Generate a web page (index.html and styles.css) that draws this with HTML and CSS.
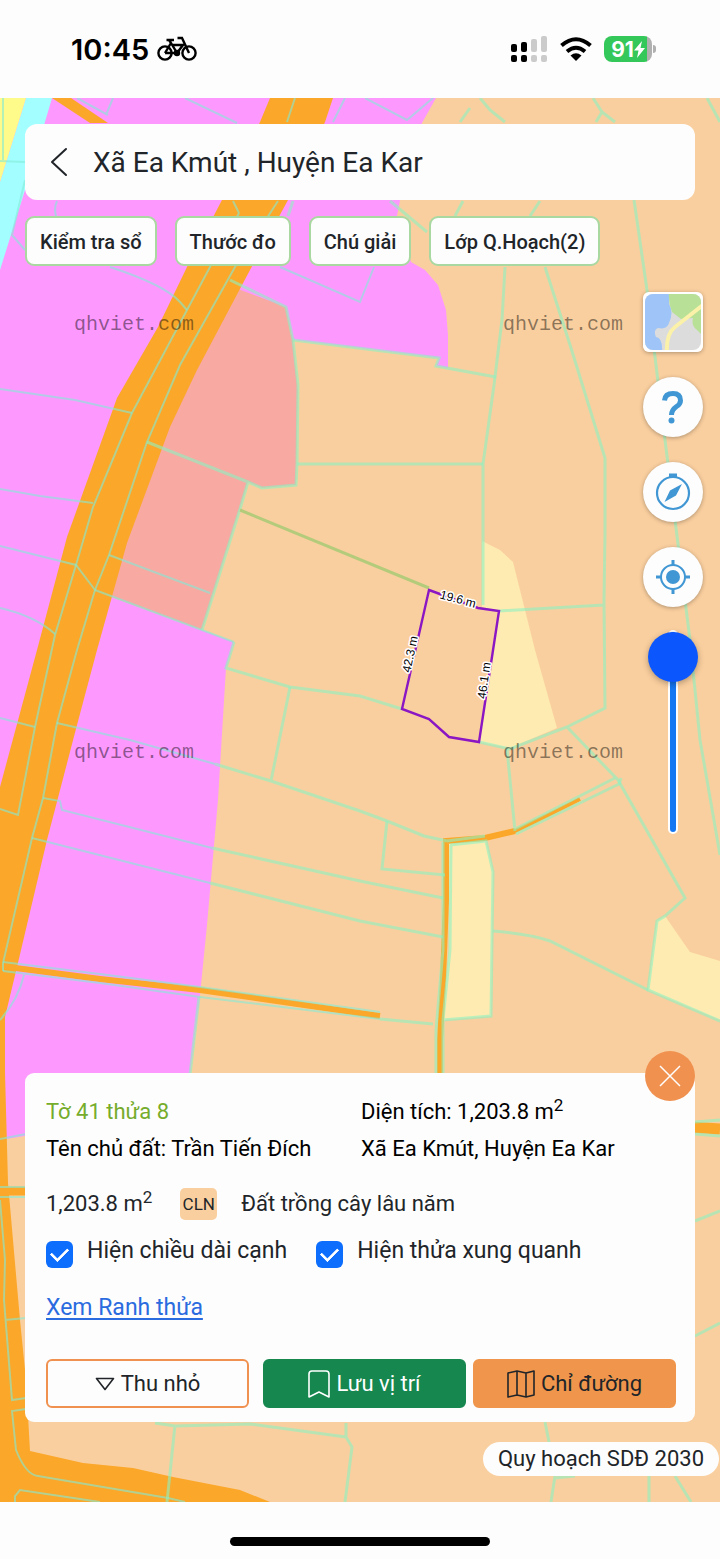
FILE: index.html
```html
<!DOCTYPE html>
<html lang="vi">
  <head>
    <title>Xã Ea Kmút, Huyện Ea Kar</title>
    <meta charset="utf-8">
    <meta name="viewport" content="width=device-width, initial-scale=1">
    <link rel="stylesheet" href="styles.css">
  </head>

  <body>
    <header class="status-bar">
      <div class="status-left">
        <span class="clock">10:45</span>
        <svg class="bike" width="40" height="26" viewBox="0 0 40 26" fill="none" stroke="#000" stroke-width="2.4">
          <circle cx="8" cy="17" r="6.6"/>
          <circle cx="32" cy="17" r="6.6"/>
          <path d="M8 17L14 7L20 17H8M14 7L12 4M9.500 4H17M15 9H26L20 17M20 17L26 9M32 17L25 2H20.500"/>
          <circle cx="20" cy="17" r="2" fill="#000"/>
        </svg>
      </div>
      <div class="status-right">
        <svg width="38" height="26" viewBox="0 0 38 26">
          <g fill="#000">
            <rect x="1" y="8" width="6" height="8" rx="2"/>
            <rect x="11" y="6" width="6" height="10" rx="2"/>
            <rect x="1" y="19" width="6" height="7" rx="2"/>
            <rect x="11" y="19" width="6" height="7" rx="2"/>
          </g>
          <g fill="#cbcbcb">
            <rect x="21" y="3" width="6" height="13" rx="2"/>
            <rect x="31" y="0" width="6" height="16" rx="2"/>
            <rect x="21" y="19" width="6" height="7" rx="2"/>
            <rect x="31" y="19" width="6" height="7" rx="2"/>
          </g>
        </svg>
        <svg width="32" height="24" viewBox="0 0 32 24" fill="none" stroke="#000" stroke-width="4">
          <path d="M1.500 8.500Q16 -4 30.500 8.500"/>
          <path d="M7 14.500Q16 7 25 14.500"/>
          <path d="M10.500 18.500Q16 14 21.500 18.500L16 24Z" fill="#000" stroke="none"/>
        </svg>
        <div class="battery">
          <span>91</span>
          <svg width="11" height="17" viewBox="0 0 11 17" fill="#fff"><path d="M8 0L0 9.500H4.500L3 17L11 7H6.500Z"/></svg>
        </div>
      </div>
    </header>

    <main class="map">
      <svg class="map-canvas" viewBox="0 98 720 1404" preserveAspectRatio="xMidYMin slice">
        <!-- land use areas -->
        <rect x="0" y="98" width="720" height="1404" fill="#facf9f"/>
        <path fill="#fd99fe" d="M0 98H436L422 123L402 190L397 216L411 262L425 270L438 285L446 310L448 335V368L436 366L439 358L360 348L293 340L240 290L95 591L234 642L226 668L218 800L207 925L200 995L190 1075L25 1136L0 1140Z"/>
        <path fill="#a3ffff" d="M26 98H52L25 190L0 270V182Z"/>
        <path fill="#fffb8b" d="M0 98H26L0 182Z"/>
        <path fill="#f8a9a2" d="M230 286L286 307L293 340L298 390L296 485L262 488L248 482L202 630L95 591Z"/>
        <g fill="#feebb1">
          <path d="M482 541L500 550L513 562L535 650L557 728L510 748L479 742L499 611L482 607Z"/>
          <path d="M449 842L486 841L493 872L491 1016L443 1020L449 950Z"/>
          <path d="M665 916L690 952L720 961V1020L648 990L657 921Z"/>
        </g>

        <!-- roads -->
        <path fill="#fba729" d="M270 98H333L325 122L288 200L250 270L197 370L170 427L127 543L97 650L77 725L47 840L17 967L5 1017V1073L8 1183L20 1320L26 1380L30 1451L83 1463L133 1468L173 1477L240 1490L270 1502H0V787L37 650L67 537L117 398L158 327L187 267L222 200L260 122Z"/>
        <path fill="#fba729" d="M52 98H71L108 123H90Z"/>
        <g fill="none" stroke="#fba729">
          <path stroke-width="6" d="M0 966L100 979L200 990L380 1016"/>
          <path stroke-width="6" d="M440 1075V1040L443 980L446 900V841L485 838L515 831"/>
          <path stroke-width="4" d="M485 838L515 831L548 815L580 799"/>
          <path stroke-width="9" d="M0 1191H26"/>
          <path stroke-width="11" d="M690 1127L720 1129"/>
        </g>

        <!-- parcel borders -->
        <g class="border thin">
          <path d="M295 98L287 122M233 201L239 213M278 201L235 267L180 365L147 442L109 555L95 590L77 650L57 723L43 798L32 838L3 963V971"/>
          <path d="M239 213L210 267L187 310L132 413L93 507L76 565L55 635L35 727L18 815L0 809"/>
          <path d="M110 267Q165 285 180 302L187 310M0 389L75 400L132 413M0 489L40 496L93 503M0 546L76 565L95 590M0 608Q35 616 55 634M0 718L35 727"/>
          <path d="M57 723L130 740L215 764M43 798L60 801L62 810L212 848M32 838L210 883M109 555L210 593M95 590L234 642"/>
          <path d="M3 962L100 974L200 987L380 1012M3 971L100 983L200 997L380 1019M24 975Q18 1000 0 1020"/>
          <path d="M185 98L237 123M113 98L106 115M77 98L108 115M345 98L333 122M365 98L407 120L433 98M0 161L25 162M3 98V160M25 180L12 235L25 250M57 201Q52 212 60 225M280 267L360 302L374 267"/>
          <path d="M0 1139L26 1134M0 1187H26M0 1197H26M0 1200L5 1260L4 1300L12 1400L26 1398M5 1320L26 1318M26 1409L12 1411L16 1450Q26 1475 38 1476L168 1498L185 1502M15 1502V1496L20 1490L60 1496L100 1502"/>
        </g>
        <g class="border">
          <path d="M230 280L286 307L293 340L298 385L297 464L296 485L262 488L248 482L147 442M234 642L226 668L290 687L360 696L402 709M248 482L240 509L202 630"/>
          <path d="M293 340L439 358L436 366L496 377M297 464H483M290 687L271 781M215 764L271 781L360 811L387 821L424 836L447 841"/>
          <path d="M212 848L360 881L443 898M210 883L360 921L443 937M387 821L382 869L445 875"/>
          <path d="M505 267L502 320L494 385L483 464V605M545 267L571 348L605 458V535L604 600L605 708L567 727L510 749L479 742M499 611L604 605M567 727L618 780L685 898L665 916L657 921L648 990L720 1021"/>
          <path d="M507 749L515 831M515 829L615 778M516 834L619 784L621 778M447 841L485 836M450 845L486 841L493 872L491 1016L443 1020M443 842V950L436 1030V1075M451 845L450 950L443 1020V1075"/>
          <path d="M493 931Q530 934 550 941L648 990M380 1019L433 1024M199 997L190 1075"/>
          <path d="M634 200L647 290L665 440L690 640L700 740L720 855M480 98L490 110L505 122M470 108L460 122M593 98L602 112L615 122M602 112L596 122M707 98L720 122"/>
          <path d="M463 201L455 216M540 201L530 216M390 201L427 232M293 201L288 216"/>
          <path d="M155 1423L175 1426L250 1424L346 1437V1423M175 1425L167 1502M346 1437L352 1447L345 1502M545 1422L549 1442M555 1476L551 1502M555 1478L575 1476M649 1476V1502M675 1476L691 1502M695 1122L720 1120M695 1134L720 1136M695 1221L720 1211M695 1336L720 1323"/>
        </g>
        <path class="border ditch" d="M240 510L429 588"/>

        <!-- selected parcel -->
        <path class="parcel" d="M429 590L478 608L499 611L479 742L449 737L429 719L402 709Z"/>
        <g class="edge-length">
          <text transform="translate(457 603) rotate(15)">19.6 m</text>
          <text transform="translate(414 655) rotate(-78)">42.3 m</text>
          <text transform="translate(488 681) rotate(-82)">46.1 m</text>
        </g>

        <g class="watermark">
          <text x="74" y="330">qhviet.com</text>
          <text x="503" y="330">qhviet.com</text>
          <text x="74" y="758">qhviet.com</text>
          <text x="503" y="758">qhviet.com</text>
        </g>
      </svg>

      <div class="place-bar">
        <button class="back" aria-label="Quay lại">
          <svg width="18" height="30" viewBox="0 0 18 30" fill="none" stroke="#212529" stroke-width="2" stroke-linecap="round" stroke-linejoin="round"><path d="M16 2L2 15L16 28"/></svg>
        </button>
        <h1>Xã Ea Kmút , Huyện Ea Kar</h1>
      </div>

      <nav class="chips">
        <button>Kiểm tra sổ</button>
        <button>Thước đo</button>
        <button>Chú giải</button>
        <button>Lớp Q.Hoạch(2)</button>
      </nav>

      <div class="tools">
        <button class="layer" aria-label="Lớp bản đồ">
          <svg width="60" height="60" viewBox="0 0 60 60">
            <rect width="60" height="60" rx="6" fill="#fff"/>
            <clipPath id="thumb"><rect x="2" y="2" width="56" height="56" rx="8"/></clipPath>
            <g clip-path="url(#thumb)">
              <rect width="60" height="60" fill="#dcdcdc"/>
              <path fill="#9fc5f8" d="M0 0H26V12Q31 20 26 31Q24 38 15 36Q10 38 13 45Q20 46 19 60H0Z"/>
              <path fill="#b9e097" d="M26 0H60V44L54 38Q48 34 50 26L38 27L29 20Q25 10 26 0Z"/>
              <path fill="none" stroke="#fbf1a9" stroke-width="4" d="M24 60Q23 42 32 35L60 13"/>
            </g>
          </svg>
        </button>
        <button class="round" aria-label="Trợ giúp">
          <svg width="60" height="60" viewBox="0 0 60 60" fill="none" stroke="#4097d3" stroke-width="5">
            <path d="M21.500 23.500Q22 16.500 30 16.500Q37.500 16.500 37.500 23.500Q37.500 27 33.500 29.500Q28.500 33 28.500 38"/>
            <circle cx="28.500" cy="43.500" r="3" fill="#4097d3" stroke="none"/>
          </svg>
        </button>
        <button class="round" aria-label="La bàn">
          <svg width="60" height="60" viewBox="0 0 60 60">
            <circle cx="30" cy="31" r="16" fill="none" stroke="#4097d3" stroke-width="2.200"/>
            <path fill="#4097d3" d="M26 11.500H34V15H26ZM39 22L33 33.500L21.500 40L27 28.500Z"/>
          </svg>
        </button>
        <button class="round" aria-label="Vị trí của tôi">
          <svg width="60" height="60" viewBox="0 0 60 60" fill="none" stroke="#4097d3">
            <circle cx="30" cy="30" r="12" stroke-width="2"/>
            <circle cx="30" cy="30" r="7" fill="#4097d3" stroke="none"/>
            <path stroke-width="3" d="M30 13V19M30 41V47M13 30H19M41 30H47"/>
          </svg>
        </button>
        <input class="opacity" type="range" min="0" max="100" value="100" aria-label="Độ mờ lớp quy hoạch">
      </div>

      <section class="card">
        <button class="close" aria-label="Đóng">
          <svg width="50" height="50" viewBox="0 0 50 50" stroke="#fff" stroke-width="1.500"><path d="M15 15L35 35M35 15L15 35"/></svg>
        </button>
        <div class="info">
          <span class="sheet">Tờ 41 thửa 8</span>
          <span>Diện tích: 1,203.8 m<sup>2</sup></span>
          <span>Tên chủ đất: Trần Tiến Đích</span>
          <span>Xã Ea Kmút, Huyện Ea Kar</span>
        </div>
        <div class="land-type">
          <span>1,203.8 m<sup>2</sup></span>
          <span class="code">CLN</span>
          <span>Đất trồng cây lâu năm</span>
        </div>
        <div class="checks">
          <input type="checkbox" id="edges" checked>
          <label for="edges">Hiện chiều dài cạnh</label>
          <input type="checkbox" id="around" checked>
          <label for="around">Hiện thửa xung quanh</label>
        </div>
        <a class="boundary" href="#">Xem Ranh thửa</a>
        <div class="actions">
          <button class="collapse">
            <svg width="20" height="14" viewBox="0 0 20 14" fill="none" stroke="#212529" stroke-width="1.600" stroke-linejoin="round"><path d="M1.500 1.500H18.500L10 12.500Z"/></svg>
            Thu nhỏ
          </button>
          <button class="save">
            <svg width="22" height="28" viewBox="0 0 22 28" fill="none" stroke="#fff" stroke-width="1.600" stroke-linejoin="round"><path d="M1 27V4Q1 1 4 1H18Q21 1 21 4V27L11 22Z"/></svg>
            Lưu vị trí
          </button>
          <button class="route">
            <svg width="28" height="28" viewBox="0 0 28 28" fill="none" stroke="#212529" stroke-width="1.600" stroke-linejoin="round"><path d="M1 3L10 1L19 3L27 1V25L19 27L10 25L1 27ZM10 1V25M19 3V27"/></svg>
            Chỉ đường
          </button>
        </div>
      </section>

      <div class="legend">Quy hoạch SDĐ 2030</div>
    </main>

    <footer class="home-bar"><span></span></footer>
  </body>
</html>
```
FILE: styles.css
```css
*{
  box-sizing: border-box;
}
body{
  margin: 0;
  min-height: 100vh;
  display: flex;
  flex-direction: column;
  background-color: #fdfdfd;
  color: #212529;
  font-family: Roboto, "Noto Sans", sans-serif;
  font-size: 22px;
}
button{
  font: inherit;
  color: inherit;
  border: none;
  padding: 0;
  background: none;
}
svg{
  display: block;
  flex-shrink: 0;
}

/* phone status bar */
.status-bar{
  height: 98px;
  padding: 0 68px 0 71px;
  display: flex;
  justify-content: space-between;
  align-items: center;
}
.status-left, .status-right{
  display: flex;
  align-items: center;
}
.status-left{
  gap: 8px;
}
.status-right{
  gap: 12px;
}
.clock{
  font-family: Inter, sans-serif;
  font-size: 29px;
  font-weight: 600;
  color: #000;
}
.battery{
  position: relative;
  width: 48px;
  height: 26px;
  border-radius: 8px;
  background: linear-gradient(to right, #34c759 90%, #b0b0b0 90%);
  display: flex;
  align-items: center;
  justify-content: center;
  font-family: Inter, sans-serif;
  font-size: 21px;
  font-weight: 700;
  color: #fff;
}
.battery::after{
  content: "";
  position: absolute;
  right: -4px;
  top: 9px;
  width: 3px;
  height: 8px;
  border-radius: 0 3px 3px 0;
  background-color: #b0b0b0;
}

/* map */
.map{
  flex: 1;
  position: relative;
  overflow: hidden;
  padding: 26px 25px;
  display: flex;
  flex-direction: column;
}
.map-canvas{
  position: absolute;
  top: 0;
  left: 0;
  width: 100%;
  height: 100%;
}
.map > div, .map > nav, .map > section{
  position: relative;
}
.border{
  fill: none;
  stroke: rgba(140, 242, 194, 0.6);
  stroke-width: 3;
}
.thin{
  stroke: rgba(130, 235, 215, 0.6);
  stroke-width: 2;
}
.ditch{
  stroke: #b5cb7c;
}
.parcel{
  fill: none;
  stroke: #8a16c4;
  stroke-width: 2.4;
}
.edge-length{
  font-family: "Liberation Sans", Arial, sans-serif;
  font-size: 12px;
  text-anchor: middle;
  fill: #000;
  stroke: #fff;
  stroke-width: 3;
  stroke-linejoin: round;
  paint-order: stroke;
}
.watermark{
  font-family: "Liberation Mono", "Courier New", monospace;
  font-size: 20px;
  fill: #000;
  fill-opacity: 0.45;
}

.place-bar{
  height: 76px;
  padding: 0 25px;
  border-radius: 12px;
  background-color: #fdfdfd;
  display: flex;
  align-items: center;
  gap: 25px;
}
.place-bar h1{
  margin: 0;
  font-size: 28px;
  font-weight: 400;
}
.chips{
  margin-top: 16px;
  display: flex;
  gap: 18px;
}
.chips button{
  height: 50px;
  padding: 1px 13px 0;
  border: 2px solid #a9d8a0;
  border-radius: 9px;
  background-color: #fdfdfd;
  font-size: 20px;
  font-weight: 500;
}

/* buttons on the right edge */
.tools{
  align-self: flex-end;
  margin: 26px -8px 0 0;
  display: flex;
  flex-direction: column;
  align-items: center;
  gap: 25px;
}
.layer, .round{
  width: 60px;
  height: 60px;
  box-shadow: 0 1px 4px rgba(0, 0, 0, 0.3);
}
.layer{
  border-radius: 6px;
}
.round{
  border-radius: 50%;
  background-color: #fdfdfd;
}
.opacity{
  appearance: none;
  -webkit-appearance: none;
  writing-mode: vertical-lr;
  direction: rtl;
  width: 50px;
  height: 200px;
  margin: 0;
  background: none;
}
.opacity::-webkit-slider-runnable-track{
  width: 6px;
  height: 200px;
  border-radius: 5px;
  background-color: #1577f2;
  box-shadow: 0 0 0 2px #fff;
}
.opacity::-webkit-slider-thumb{
  -webkit-appearance: none;
  width: 50px;
  height: 50px;
  margin: 0 -22px;
  border-radius: 50%;
  background-color: #0b57fd;
  box-shadow: 0 2px 6px rgba(0, 0, 0, 0.3);
}

/* parcel card */
.card{
  margin-top: auto;
  padding: 20px 19px 14px 21px;
  border-radius: 9px;
  background-color: #fdfdfd;
}
.card sup{
  font-size: 17px;
  line-height: 0;
}
.close{
  position: absolute;
  top: -22px;
  right: 0;
  border-radius: 50%;
  background-color: #f09150;
}
.info{
  display: grid;
  grid-template-columns: 1fr 1fr;
  line-height: 37px;
  color: #000;
}
.info .sheet{
  color: #76ac2c;
}
.land-type{
  margin-top: 20px;
  display: flex;
  align-items: center;
  line-height: 34px;
}
.land-type .code{
  width: 37px;
  margin: 0 24px 0 28px;
  border-radius: 5px;
  background-color: #facf9f;
  font-size: 17px;
  line-height: 32px;
  text-align: center;
}
.checks{
  margin-top: 13px;
  display: flex;
  align-items: center;
  font-size: 23px;
  line-height: 34px;
}
.checks input{
  appearance: none;
  -webkit-appearance: none;
  width: 27px;
  height: 27px;
  margin: 6px 14px 0 0;
  border-radius: 6px;
  background-color: #0d6efd;
  display: grid;
  place-items: center;
}
.checks input::before{
  content: "";
  width: 14px;
  height: 8px;
  margin-bottom: 3px;
  border: solid #fff;
  border-width: 0 0 3px 3px;
  border-radius: 1px;
  transform: rotate(-45deg);
}
.checks input:not(:checked){
  background-color: #adb5bd;
}
.checks label{
  margin-right: 29px;
}
.boundary{
  display: inline-block;
  margin-top: 23px;
  color: #2a6be0;
  font-size: 23px;
  line-height: 34px;
  text-underline-offset: 3px;
}
.actions{
  margin-top: 34px;
  display: flex;
  gap: 7px;
}
.actions button{
  flex: 1;
  height: 49px;
  border: 2px solid;
  border-radius: 6px;
  display: flex;
  align-items: center;
  justify-content: center;
  gap: 6px;
}
.actions .collapse{
  margin-right: 7px;
  border-color: #f09150;
}
.actions .save{
  border-color: #15874f;
  background-color: #15874f;
  color: #fff;
}
.actions .route{
  border-color: #f0964c;
  background-color: #f0964c;
}

.legend{
  align-self: flex-end;
  margin: 20px -24px 0 0;
  padding: 0 15px;
  border-radius: 17px;
  background-color: #fdfdfd;
  line-height: 34px;
}

.home-bar{
  height: 57px;
  display: flex;
  justify-content: center;
  align-items: center;
  padding-top: 22px;
}
.home-bar span{
  width: 36%;
  height: 9px;
  border-radius: 5px;
  background-color: #000;
}
```
